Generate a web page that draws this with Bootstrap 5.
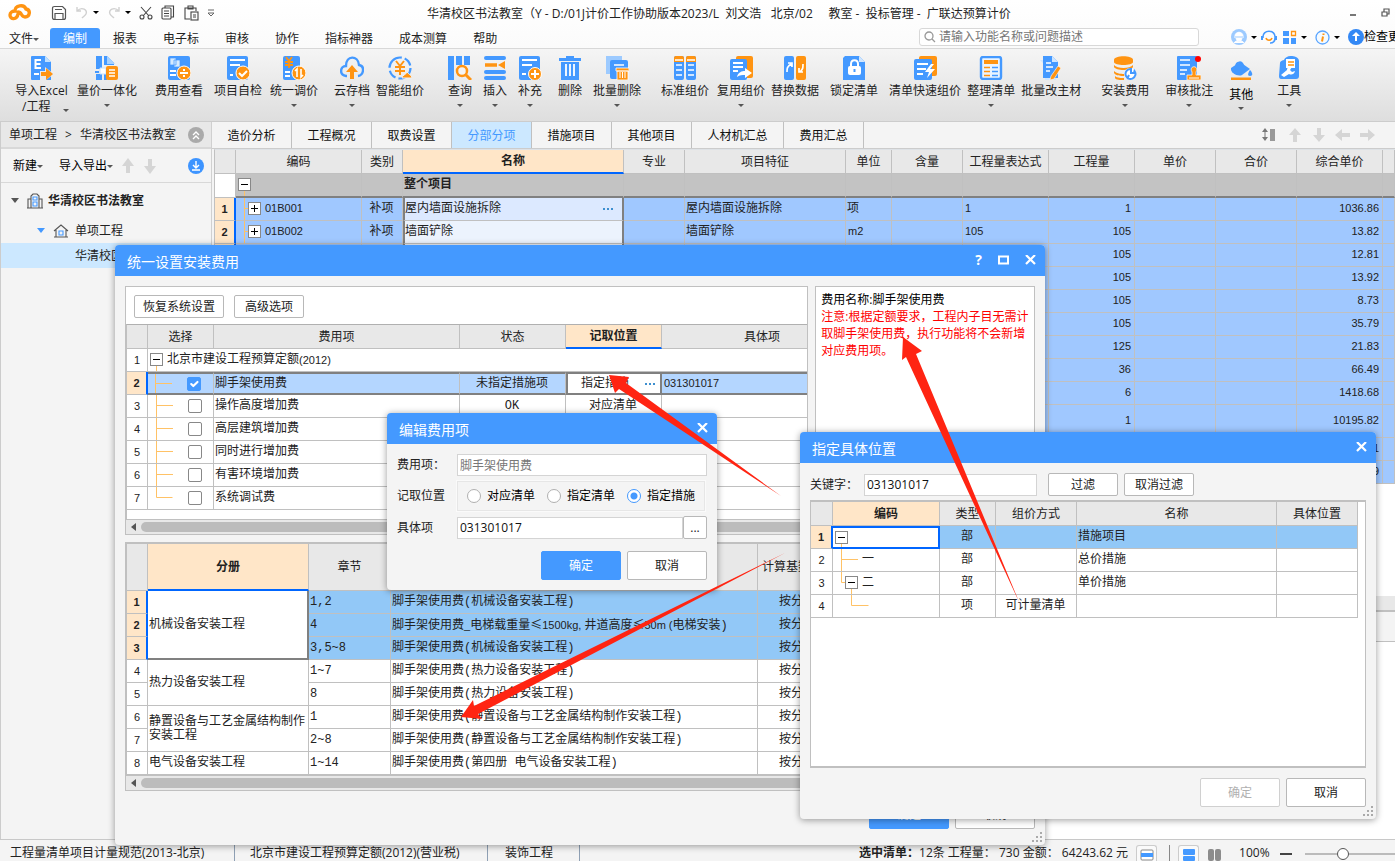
<!DOCTYPE html>
<html lang="zh-CN">
<head>
<meta charset="utf-8">
<meta name="viewport" content="width=device-width, initial-scale=1">
<title>广联达预算计价</title>
<link href="https://cdn.jsdelivr.net/npm/bootstrap@5.3.0/dist/css/bootstrap.min.css" rel="stylesheet">
<style>
:root{--blue:#4499ff;--org:#ff9412;--line:#c0c0c0;--head:#e8e8e8;--sel:#a0c8ff;--ui:"Open Sans","Noto Sans CJK SC",sans-serif}
body{font:12px/16px var(--ui);color:#222;background:#f4f4f4;height:100vh;overflow:hidden}
button,input{font:inherit;color:inherit}
a{color:inherit;text-decoration:none}
svg{display:block;flex:none}
.caret{width:0;height:0;border:3px solid transparent;border-top-color:#555;border-bottom:0;flex:none;display:inline-block}
.caret.dk{border-top-color:#000}
.plain{background:none;border:0;padding:0}
/* title, menu, ribbon */
.topbar{background:linear-gradient(#fff,#f4f4f4)}
.titlebar{height:25px;position:relative}
.qat{gap:4px;padding-left:8px}
.apptitle{position:absolute;left:427px;top:6px;white-space:pre;color:#222}
.menubar{height:24px;border-bottom:1px solid #d8d8d8}
.menubar .menu-item{padding:3px 13px 1px;height:20px;white-space:nowrap}
.menubar .menu-item.first{padding:3px 11px 1px 9px}
.menubar .menu-item.on{background:var(--blue);color:#fff;border-radius:3px 3px 0 0}
.search{width:280px;height:18px;border:1px solid #d8d8d8;border-radius:3px;background:#fff;padding-left:4px}
.search input{border:0;background:none;outline:0;padding:0 0 0 3px;width:240px;height:16px}
.search input::placeholder{color:#777;opacity:1}
.account{width:188px}
.ribbon{height:73px;background:linear-gradient(#f5f5f5,#dedede);border-bottom:1px solid #ccc;padding:7px 0 0 14px}
.rb{display:flex;flex-direction:column;align-items:center;white-space:nowrap;background:none;border:0;padding:0;flex:none;height:60px;color:#222}
.rb svg{width:24px;height:24px;margin-bottom:3px}
.rb .caret{margin-top:5px}
.s6{margin-left:6px}.s8{margin-left:8px}.s11{margin-left:11px}.s16{margin-left:16px}.s18{margin-left:18px}.s20{margin-left:20px}.s24{margin-left:24px}
/* side tree */
.side{width:212px;flex:none;border-left:1px solid #ccc;border-right:1px solid #d0d0d0;background:#f4f4f4}
.crumb{height:27px;background:var(--head);border-bottom:2px solid #d8d8d8;padding:0 7px 0 8px}
.sidetools{height:34px;border-bottom:1px solid #d8d8d8;padding:0 7px 0 12px}
.node{height:25px;white-space:nowrap}
.node.lg{height:35px}
.node.on{background:#cce8ff;padding-left:74px}
/* sheet tabs */
.sheets{height:27px;background:#f4f4f4;border-bottom:1px solid #ccc}
.sheets .sheet{width:80px;text-align:center;border-right:1px solid var(--line);line-height:28px;height:26px;color:#111}
.sheets .sheet.wide{width:92px}
.sheets .sheet.on{background:#cce8ff;color:var(--blue)}
/* grids */
.sheetgrid{border-collapse:separate;border-spacing:0;table-layout:fixed;color:#222;font-family:"Liberation Mono","Noto Sans CJK SC",monospace}
.sheetgrid th,.sheetgrid td{border-right:1px solid var(--line);border-bottom:1px solid var(--line);padding:0 2px;height:23px;line-height:14px;white-space:nowrap;overflow:hidden;font-weight:400}
.sheetgrid td{background:#fff;padding-left:1px}
.sheetgrid thead th{background:var(--head);text-align:center;height:24px;padding-top:2px}
.sheetgrid thead th.hot{background:#ffe6c8;font-weight:700;border-bottom:2px solid #0066ff}
.sheetgrid tbody th{text-align:center;background:#fff;padding:0}
.sheetgrid tbody th.hot{background:#ffe6c8;font-weight:700;border-right:2px solid #0066ff}
.lt,.sheetgrid .nn,.sheetgrid tbody th{font-family:"Liberation Sans","Noto Sans CJK SC",sans-serif;font-size:11px}
.cj{font-family:"Noto Sans CJK SC",sans-serif}
.sheetgrid td.nn{padding:0 3px 2px 2px}
.sheetgrid td.c{text-align:center}.sheetgrid td.r{text-align:right}
.sheetgrid .tree{padding:0}
.bill{width:100%}
.bill tbody td{background:var(--sel);padding-bottom:1px}
.bill .tree .lt{padding-bottom:2px}
.bill tr.grp td{background:#c3c3c3;border-bottom:2px solid #808080;font-weight:700;height:24px;padding-bottom:0}
.bill tr td.nm{background:#ecf3fd;border-left:2px solid #808080;border-right:2px solid #808080;padding-left:0}
.bill tr.first td.nm{background:#dce9ff}
.bill tr.tall td,.bill tr.tall th{height:33px}
.fill{background:#fff;border-left:1px solid var(--line);margin-left:2px}
/* windows */
.win{position:absolute;background:#f4f4f4;border-radius:4px;box-shadow:0 1px 7px rgba(0,0,0,.4)}
.winhead{height:31px;background:var(--blue);color:#fff;font-size:14px;border-radius:4px 4px 0 0;padding:2px 9px 0 12px}
.winhead .plain{padding-bottom:3px}
.w1{left:115px;top:245px;width:930px}
.w2{left:387px;top:413px;width:330px}
.w3{left:800px;top:432px;width:576px}
.pbtn{background:#fff;border:1px solid #b8b8b8;border-radius:2px;height:23px;padding:1px 0 0;line-height:20px;color:#222;text-align:center}
.pbtn.big{width:80px;height:29px}
.pbtn.pri{background:var(--blue);border-color:var(--blue);color:#fff}
.pbtn:disabled{color:#b0b0b0;border-color:#d0d0d0}
.wd90{width:90px}.wd70{width:70px}.wd24{width:24px}
.box{border:1px solid var(--line);background:#fff;overflow:hidden}
.tin{border:1px solid #d4d4d4;background:#fff;height:22px;padding:0 2px;outline:0;border-radius:0;color:#111}
.tin:disabled{color:#777;background:#fff}
.hbar{height:15px;background:var(--head);border-top:1px solid var(--line);gap:4px;padding-left:5px}
.hbar .thumb{height:10px;background:#bcbcbc;border-radius:5px 0 0 5px;flex:1}
.fees{width:736px}.parts{width:736px}.locs{width:547px}
.fees tr.on td{background:#b4d6ff;border-top:2px solid #808080;border-bottom:2px solid #808080}
.fees tr.on td.ed{background:#fff;border-left:2px solid #808080;border-right:2px solid #808080}
.fees .form-check-input{width:14px;height:14px;margin:0 0 0 5px;border:1px solid #888;border-radius:2px;background-color:#fff}
.fees .form-check-input:checked{background-color:var(--blue);border-color:var(--blue);background-size:14px}
.parts thead th,.parts thead th.hot{height:47px}
.parts tbody tr.on td{background:#92c8f7}
.parts tbody tr.on td.whole{background:#fff;border-right:2px solid #808080;border-bottom:2px solid #808080}
.parts td.whole{white-space:normal}
.parts td.base{padding-left:21px}
.locs tr.on td{background:#92c8f7}
.locs tr.on td.ed{background:#fff;border:2px solid #0066ff;border-left:0}
.locs thead th.hot{border-bottom-width:1px;border-bottom-color:var(--line)}
.note{width:220px;padding:4px 5px;line-height:17px;color:#000}
.note p{margin:0;color:#f00}
.lab{width:60px;flex:none}
.frow{margin-bottom:5px}
.radios{border:1px solid #e6e6e6;outline:1px solid #fafafa;height:30px;width:248px;padding-left:9px;gap:12px;color:#000}
.radios .form-check-input{width:14px;height:14px;margin:0 6px 0 0;border:1px solid #b0b0b0;background:#fff}
.radios .form-check-input:checked{border-color:var(--blue);background:radial-gradient(circle,var(--blue) 0 3px,#fff 4px)}
.grip{position:absolute;right:3px;bottom:3px}
.marks{position:absolute;left:0;top:0;pointer-events:none}
/* status bar */
.status{height:22px;border-top:1px solid #c8c8c8;background:#f4f4f4;white-space:nowrap}
.status .cellx{border-right:1px solid #8fa0b4;height:21px;padding-top:5px}
.status .rgt{width:536px;padding-top:5px;overflow:hidden}
.tog{width:21px;height:18px;border:1px solid #ccc;border-bottom:0;border-radius:3px 3px 0 0;background:#fafafa;padding:0;flex:none}
.rule{border-left:1px solid #888;height:18px}
.zoomer{width:104px;flex:none;appearance:none;height:12px;background:linear-gradient(#bbb,#bbb) center/100% 2px no-repeat}
.zoomer::-webkit-slider-thumb{appearance:none;width:12px;height:12px;border:1px solid #555;border-radius:50%;background:#fff}
</style>
</head>
<body class="d-flex flex-column">
<header class="topbar">
  <div class="titlebar d-flex align-items-center">
    <div class="qat d-flex align-items-center">
      <svg width="23" height="17" viewBox="0 0 23 17" fill="none" stroke="#ff9412" stroke-width="3.400" stroke-linecap="round"><path d="M10 10c-1 6-8 6-8 1 0-3 3-4 5-4 0-6 9-7 11-2 5 1 4 8-1 8-4 0-3-5-7-5"/></svg>
      <button class="plain ms-3" aria-label="保存"><svg width="16" height="16" fill="none" stroke="#555" stroke-width="1.2"><path d="M1.500 3.500q0-2 2-2h8l3 3v8q0 2-2 2h-9q-2 0-2-2zM4 4.500h7M4 14V8.500h8V14"/></svg></button>
      <button class="plain ms-1" aria-label="撤销"><svg width="14" height="14" fill="none" stroke="#d0d0d0" stroke-width="1.4"><path d="M2 1v4h4M2 5c5-5 11-1 9 3-1 2-3 3-4 4"/></svg></button>
      <i class="caret dk"></i>
      <button class="plain ms-1" aria-label="重做"><svg width="14" height="14" fill="none" stroke="#d0d0d0" stroke-width="1.4"><path d="M12 1v4H8M12 5C7 0 1 4 3 8c1 2 3 3 4 4"/></svg></button>
      <i class="caret dk"></i>
      <button class="plain ms-1" aria-label="剪切"><svg width="14" height="14" fill="none" stroke="#444" stroke-width="1.1"><path d="M2 1l8 9M12 1 4 10"/><circle cx="3" cy="11" r="2"/><circle cx="11" cy="11" r="2"/></svg></button>
      <button class="plain ms-1" aria-label="复制"><svg width="14" height="15" fill="none" stroke="#444" stroke-width="1.1"><rect x="1" y="3" width="9" height="11" rx="1"/><path d="M4 3V1h8.500v11H10M3 6h5M3 8.500h5M3 11h5"/></svg></button>
      <button class="plain ms-1" aria-label="粘贴"><svg width="16" height="16" fill="none" stroke="#444" stroke-width="1.1"><path d="M7 14H2V3h11v3M5 1h5v3H5z"/><rect x="8" y="7" width="7" height="8"/><path d="M10 10h3M10 12h3"/></svg></button>
      <svg class="ms-1" width="8" height="8" fill="none" stroke="#666"><path d="M1 1h6M1 4l3 3 3-3z"/></svg>
    </div>
    <div class="apptitle">华清校区书法教室（Y - D:/01J计价工作协助版本2023/L  刘文浩   北京/02     教室 -  投标管理 -  广联达预算计价</div>
    <div class="ms-auto d-flex align-items-center gap-4">
      <button class="plain" aria-label="最小化"><svg width="8" height="8"><path d="M1 6h6" stroke="#555" stroke-width="1.6"/></svg></button>
      <button class="plain me-1" aria-label="还原"><svg width="10" height="10" fill="none" stroke="#555" stroke-width="1.2"><path d="M1 4h5v4H1zM3 4V1h5v5H6"/></svg></button>
    </div>
  </div>
  <nav class="menubar d-flex align-items-end overflow-hidden">
    <a class="menu-item first" href="#">文件<i class="caret align-middle"></i></a>
    <a class="menu-item on" href="#">编制</a><a class="menu-item" href="#">报表</a><a class="menu-item" href="#">电子标</a><a class="menu-item" href="#">审核</a><a class="menu-item" href="#">协作</a><a class="menu-item" href="#">指标神器</a><a class="menu-item" href="#">成本测算</a><a class="menu-item" href="#">帮助</a>
    <div class="ms-auto d-flex align-items-center flex-shrink-0" style="margin-bottom:2px">
      <label class="search d-flex align-items-center"><svg width="12" height="12" fill="none" stroke="#999" stroke-width="1.3"><circle cx="5" cy="5" r="4"/><path d="M8 8l3 3"/></svg><input type="text" placeholder="请输入功能名称或问题描述" aria-label="搜索"></label>
      <div class="account d-flex align-items-center ps-4 ms-2">
        <svg width="16" height="16"><circle cx="8" cy="8" r="8" fill="#9ccaff"/><path d="M4 7c0-5 8-5 8 0M3 8h10M5 9c1 5 5 5 6 0M3 14c1-3 9-3 10 0" fill="#fff" stroke="#fff"/></svg>
        <i class="caret dk ms-1 me-1"></i>
        <svg width="16" height="16" fill="none"><path d="M2 9c-1-9 13-9 12 0M14 9c0 3-2 5-5 5" stroke="#4499ff" stroke-width="1.6"/><path d="M1 7v4M15 7v4" stroke="#4499ff" stroke-width="2"/><path d="M5 9c1 3 5 3 6 0" stroke="#ff9412" stroke-width="1.6"/></svg>
        <svg class="ms-1 me-1" width="16" height="16"><path d="M2 2h6v5H2zM2 9h6v6H2zM10 9h5v6h-5z" fill="#4499ff"/><path d="M10.500 2.500h4v4h-4z" fill="none" stroke="#ff9412" stroke-width="1.3"/></svg>
        <i class="caret dk me-1"></i>
        <svg class="ms-1 me-1" width="15" height="15"><circle cx="7.500" cy="7.500" r="6.500" fill="#f4faff" stroke="#5aa5ff" stroke-width="1.3"/><path d="M8.500 3.500v1.500M8 6.500l-1 5" stroke="#ff9412" stroke-width="2"/></svg>
        <i class="caret dk me-1"></i>
        <svg class="ms-1" width="16" height="16"><circle cx="8" cy="8" r="8" fill="#3388f5"/><path d="M8 3l4 4H9v5H7V7H4z" fill="#fff"/></svg>
        <a href="#" class="text-black text-nowrap">检查更新</a>
      </div>
    </div>
  </nav>
  <div class="ribbon d-flex overflow-hidden">
    <button class="rb"><svg viewBox="0 0 24 24"><path d="M2 1q0-1 1-1h13l6 6v18H3q-1 0-1-1z" fill="#4499ff"/><path d="M16 0v6h6z" fill="#bfe0ff"/><path d="M12 4H6.500v8H12M7 8h4.500" fill="none" stroke="#fff" stroke-width="2"/><path d="M5 18h5" stroke="#fff" stroke-width="2"/><path d="M11 15h5v-4l9 7-8 6H11z" fill="#e9e9e9"/><path d="M12 16h5v-4l7 6-7 6v-4h-5z" fill="#ff9412"/></svg>导入Excel<span class="ps-2">/工程 &nbsp;&nbsp;&nbsp;<i class="caret align-middle"></i></span></button>
    <button class="rb s8"><svg viewBox="0 0 24 24"><path d="M1 0h6v13H1zM1 18h6v6H1zM10 0l8 7v2h-8zM9 17h3v7H9zM0 15h4v2H0z" fill="#4499ff"/><path d="M9 0h3l7 7v2H9z" fill="#4499ff"/><path d="M12 0l8 8h-8z" fill="#a8d2ff"/><path d="M5 12h6v6H5z" fill="#fff" stroke="#c8e2ff"/><rect x="11" y="10" width="12" height="14" rx="2" fill="#ff9412"/><path d="M14 14h6M14 17h6M14 20h6" stroke="#fff" stroke-width="1.500"/></svg>量价一体化<i class="caret"></i></button>
    <button class="rb s18"><svg viewBox="0 0 24 24"><rect x="1" y="0" width="22" height="24" rx="2" fill="#4499ff"/><path d="M3 2h6v7H3zM7 4h6v7H7z" fill="#d5eaff" stroke="#4499ff" stroke-width=".7"/><path d="M3 15h6M3 19h6" stroke="#fff" stroke-width="2"/><circle cx="17" cy="17" r="7" fill="#ff9412" stroke="#fff"/><path d="M13 17h8M17 13v2M17 19v2" stroke="#fff" stroke-width="2"/></svg>费用查看</button>
    <button class="rb s11"><svg viewBox="0 0 24 24"><rect x="1" width="21" height="24" rx="2" fill="#4499ff"/><path d="M4 4h15M4 9h10M4 19h3" stroke="#fff" stroke-width="2"/><circle cx="17" cy="17" r="7" fill="#ff9412" stroke="#fff"/><path d="M13 17l3 3 5-5" fill="none" stroke="#fff" stroke-width="2"/></svg>项目自检</button>
    <button class="rb s8"><svg viewBox="0 0 24 24"><rect x="1" width="17" height="24" rx="2" fill="#4499ff"/><path d="M4 1l3 4 3-4M3 6h8M3 9h8M7 5v7" fill="none" stroke="#ff9412" stroke-width="1.800"/><path d="M3 16h5M3 20h5" stroke="#fff" stroke-width="2"/><circle cx="17" cy="17" r="7" fill="#ff9412" stroke="#fff"/><path d="M15 21v-8l-2 2M19 13v8l2-2" fill="none" stroke="#fff" stroke-width="1.600"/></svg>统一调价<i class="caret"></i></button>
    <button class="rb s16"><svg viewBox="0 0 24 24"><path d="M7 20H6c-7-1-6-10 0-10 0-11 12-11 13-1 6 1 5 10-1 11" fill="none" stroke="#4499ff" stroke-width="2.400"/><path d="M12 9l6 7h-4v7h-4v-7H6z" fill="#ff9412"/></svg>云存档<i class="caret"></i></button>
    <button class="rb s6"><svg viewBox="0 0 24 24"><circle cx="12" cy="12" r="10.500" fill="none" stroke="#4499ff" stroke-width="2.200" stroke-dasharray="18 3 9 3"/><path d="M8 5l4 5 4-5M7 11h10M7 15h10M12 10v9" fill="none" stroke="#ff9412" stroke-width="2"/><path d="M14 22c0-3 4-3 5-6 1 2 5 3 5 6z" fill="#ff9412" stroke="#f0f0f0"/></svg>智能组价</button>
    <button class="rb s24"><svg viewBox="0 0 24 24"><path d="M0 0h6v24H0zM8 0h6v9H8zM16 0h6v9h-6z" fill="#4499ff"/><circle cx="14" cy="15" r="5" fill="#f4f4f4" stroke="#ff9412" stroke-width="2.500"/><path d="M18 19l5 5" stroke="#ff9412" stroke-width="3"/></svg>查询<i class="caret"></i></button>
    <button class="rb s11"><svg viewBox="0 0 24 24"><path d="M3 2h18M3 16h18M3 22h18" stroke="#4499ff" stroke-width="4" stroke-linecap="round"/><path d="M2 9h12" stroke="#ff9412" stroke-width="3.500"/><path d="M22 5v8l-7-4z" fill="#ff9412"/></svg>插入<i class="caret"></i></button>
    <button class="rb s11"><svg viewBox="0 0 24 24"><rect x="1" width="21" height="24" rx="2" fill="#4499ff"/><path d="M4 4h15M4 9h10M4 18h4" stroke="#fff" stroke-width="2"/><circle cx="17" cy="18" r="6.500" fill="#ff9412" stroke="#fff"/><path d="M13 18h8M17 14v8" stroke="#fff" stroke-width="2"/></svg>补充<i class="caret"></i></button>
    <button class="rb s16"><svg viewBox="0 0 24 24"><path d="M1 2h7V0h8v2h7v3H1zM3 6h18v18H3z" fill="#4499ff"/><path d="M8 8v12M12 8v12M16 8v12" stroke="#fff" stroke-width="1.800"/></svg>删除</button>
    <button class="rb s11"><svg viewBox="0 0 24 24"><path d="M1 0h16v18H1z" fill="#9ccaff"/><rect x="5" y="4" width="18" height="19" rx="2" fill="#4499ff"/><path d="M9 9h10" stroke="#fff" stroke-width="1.500"/><path d="M11 12h13v3H11zM12 15h11v9H12z" fill="#ff9412" stroke="#fff" stroke-width=".8"/><path d="M15 16v6M17.500 16v6M20 16v6" stroke="#fff"/></svg>批量删除<i class="caret"></i></button>
    <button class="rb s20"><svg viewBox="0 0 24 24"><rect x="1" width="10" height="24" rx="2" fill="#4499ff"/><rect x="13" width="10" height="24" rx="2" fill="#4499ff"/><path d="M1 2q0-2 2-2h6q2 0 2 2v4H1zM13 2q0-2 2-2h6q2 0 2 2v4H13z" fill="#ff9412"/><path d="M2 4h8M14 4h8M3 9h6M3 14h6M3 19h6M15 9h6M15 14h6M15 19h6" stroke="#fff" stroke-width="1.600"/></svg>标准组价</button>
    <button class="rb s8"><svg viewBox="0 0 24 24"><rect x="7" width="17" height="22" rx="2" fill="#ff9412"/><rect x="1" y="3" width="17" height="21" rx="2" fill="#4499ff"/><path d="M4 7h10M4 11h10M4 15h5" stroke="#fff" stroke-width="1.800"/><path d="M8 21c1-5 5-6 8-6v-3l7 5-7 5v-3c-3 0-5 0-8 2z" fill="#fff"/></svg>复用组价<i class="caret"></i></button>
    <button class="rb s6"><svg viewBox="0 0 24 24"><rect x="1" width="10" height="24" rx="2" fill="#4499ff"/><rect x="13" width="10" height="24" rx="2" fill="#ff9412"/><path d="M4 16c0-4 0-5 4-8M5 7h4v4M20 8c0 4 0 5-3 8M20 16h-4v-4" fill="none" stroke="#fff" stroke-width="1.700"/></svg>替换数据</button>
    <button class="rb s11"><svg viewBox="0 0 24 24"><path d="M1 2l2-2h14l6 6v18H1z" fill="#4499ff"/><path d="M17 0v6h6z" fill="#cfe6ff"/><rect x="6" y="10" width="13" height="9" rx="2" fill="#fff"/><path d="M9 10V8c0-5 7-5 7 0v2" fill="none" stroke="#fff" stroke-width="2"/><path d="M12.500 13v3" stroke="#4499ff" stroke-width="2"/></svg>锁定清单</button>
    <button class="rb s11"><svg viewBox="0 0 24 24"><rect x="6" width="18" height="20" rx="2" fill="#ff9412"/><rect x="1" y="3" width="18" height="21" rx="2" fill="#4499ff"/><path d="M4 8h11M4 13h9M4 18h6" stroke="#fff" stroke-width="1.800"/><path d="M18 8l-6 8h4l-2 6 8-9h-5l4-5z" fill="#fff"/></svg>清单快速组价</button>
    <button class="rb s6"><svg viewBox="0 0 24 24"><rect x="2" y="1" width="20" height="22" rx="2" fill="#eaf4ff" stroke="#4499ff" stroke-width="2.400"/><path d="M5 6h14" stroke="#ff9412" stroke-width="4"/><path d="M5 11.500h6M5 15.500h6M5 19.500h6" stroke="#ff9412" stroke-width="1.600"/><path d="M13 11.500h6M13 15.500h6M13 19.500h6" stroke="#4499ff" stroke-width="1.600"/></svg>整理清单<i class="caret"></i></button>
    <button class="rb s6"><svg viewBox="0 0 24 24"><path d="M1 4h5v20h11v-2" fill="#cfe6ff"/><path d="M4 0h9l6 6v16H4z" fill="#4499ff"/><path d="M13 0v6h6z" fill="#cfe6ff"/><path d="M7 7h5M7 11h7M7 15h4" stroke="#fff" stroke-width="1.700"/><path d="M19 10l3 2-7 11-4 1 1-4z" fill="#ff9412" stroke="#fff" stroke-width=".6"/></svg>批量改主材</button>
    <button class="rb s20"><svg viewBox="0 0 24 24"><path d="M1 4c0-5 19-5 19 0v2c0 4-19 4-19 0z" fill="#ff9412"/><path d="M1 9c3 4 16 4 19 0v2c-2 4-17 4-19 0zM1 15c3 3 8 3 12 3l-1 2c-4 0-9 0-11-3zM2 20c2 2 7 2 9 2v2c-4 0-8 0-9-2z" fill="#ff9412"/><circle cx="17" cy="18" r="6" fill="#fff"/><path d="M21.500 15a5 5 0 1 1-3.500-2v4h3zM16 19l-2 4" fill="none" stroke="#4499ff" stroke-width="2"/></svg>安装费用<i class="caret"></i></button>
    <button class="rb s16"><svg viewBox="0 0 24 24"><rect width="20" height="24" rx="1" fill="#4499ff"/><path d="M3 4h10M3 9h10M3 14h7M3 18h5" stroke="#fff" stroke-width="1.600"/><path d="M10 24v-5h5v-3c-4-7 8-7 4 0v3h5v5z" fill="#ff9412" stroke="#fff" stroke-width=".7"/><path d="M12 22h10" stroke="#fff"/><circle cx="21" cy="3" r="3" fill="#f00"/></svg>审核批注<i class="caret"></i></button>
    <button class="rb s16 text-black"><svg viewBox="0 0 24 24"><path d="M11 6l10 7-8 6c-4 2-12-2-11-7z" fill="#4499ff"/><path d="M7 11c0-6 7-6 7-1" fill="none" stroke="#4499ff" stroke-width="2"/><path d="M21 14c3 3 3 6 0 6s-2-3 0-6z" fill="#4499ff"/><path d="M2 23.500h20" stroke="#ff9412" stroke-width="4"/></svg><span class="pt-1">其他</span><i class="caret mt-1"></i></button>
    <button class="rb s24"><svg viewBox="0 0 24 24"><path d="M3 7q0-2 4-3c2-6 15-5 15 1v15q0 3-3 3H4q-2 0-2-3z" fill="#4499ff"/><path d="M9 3h9v9H9z" fill="#fff"/><path d="M11 6h6M11 9h6" stroke="#ff9412" stroke-width="1.600"/><path d="M4 19l6-5c0-4 4-4 5-3l-2 3 2 2 3-1c-1 4-4 4-6 3l-5 3z" fill="#fff"/></svg>工具<i class="caret"></i></button>
  </div>
</header>

<main class="d-flex flex-fill overflow-hidden">
  <aside class="side">
    <div class="crumb d-flex align-items-center"><span>单项工程</span><span class="px-1 mx-1">&gt;</span><span>华清校区书法教室</span>
      <svg class="ms-auto" width="16" height="16" fill="none" stroke="#fff" stroke-width="1.400"><circle cx="8" cy="8" r="8" fill="#aaa" stroke="none"/><path d="M5 8l3-3 3 3M5 12l3-3 3 3"/></svg></div>
    <div class="sidetools d-flex align-items-center">
      <button class="plain text-black">新建<i class="caret align-middle"></i></button>
      <button class="plain text-black ms-3">导入导出<i class="caret align-middle"></i></button>
      <svg class="ms-2 me-1" width="14" height="16" fill="#d5d5d5"><path d="M7 0l6 8H9v7H5V8H1z"/></svg>
      <svg class="ms-1" width="14" height="16" fill="#d5d5d5"><path d="M7 16l6-8H9V1H5v7H1z"/></svg>
      <svg class="ms-auto" width="16" height="16" fill="none" stroke="#fff" stroke-width="1.400"><circle cx="8" cy="8" r="8" fill="#3d94ff" stroke="none"/><path d="M8 3v7M5 7l3 3 3-3M4 12h8"/></svg>
    </div>
    <div class="node lg d-flex align-items-center fw-bold ps-2"><svg width="13" height="8"><path d="M2 1h8L6 6z" fill="#555"/></svg>
      <svg class="ms-1 me-1" width="18" height="16" fill="none" stroke="#555" stroke-width="1.100"><path d="M1 15h16M2 15V6h3M5 15V3l2-2h4l2 2v12M13 6h3v9"/><path d="M7 4h4v3H7zM7 9h4v4H7z" stroke="#4499ff"/></svg>华清校区书法教室</div>
    <div class="node d-flex align-items-center ps-4"><svg class="ms-2" width="16" height="8"><path d="M4 1h8L8 6z" fill="#4499ff"/></svg>
      <svg class="ms-1 me-1" width="18" height="16" fill="none" stroke="#555" stroke-width="1.100"><path d="M1 8l7-6 7 6M3 7v7h10V7M1 14h14"/><path d="M6 8h4v4H6z" stroke="#4499ff"/></svg>单项工程</div>
    <div class="node on d-flex align-items-center">华清校区书法教室</div>
  </aside>

  <section class="d-flex flex-column flex-fill overflow-hidden">
    <div class="sheets d-flex flex-shrink-0">
      <a class="sheet" href="#">造价分析</a><a class="sheet" href="#">工程概况</a><a class="sheet" href="#">取费设置</a><a class="sheet on" href="#">分部分项</a><a class="sheet" href="#">措施项目</a><a class="sheet" href="#">其他项目</a><a class="sheet wide" href="#">人材机汇总</a><a class="sheet" href="#">费用汇总</a>
      <div class="ms-auto d-flex align-items-center gap-2 pe-3">
        <svg width="18" height="14"><path d="M4 0l3 4H1zM4 13l3-4H1zM3.500 4h1v5h-1z" fill="#777"/><path d="M9 1h5v12H9z" fill="#999"/></svg>
        <svg width="16" height="16" fill="#d5d5d5"><path d="M8 1l6 7h-4v7H6V8H2z"/></svg>
        <svg width="16" height="16" fill="#d5d5d5"><path d="M8 15l6-7h-4V1H6v7H2z"/></svg>
        <svg width="16" height="16" fill="#d5d5d5"><path d="M0 8l7-6v4h8v4H7v4z"/></svg>
        <svg class="me-1" width="16" height="16" fill="#d5d5d5"><path d="M16 8l-7-6v4H1v4h8v4z"/></svg>
      </div>
    </div>
    <div class="fill flex-fill overflow-hidden border-top">
    <table class="sheetgrid bill">
      <colgroup><col style="width:21px"><col style="width:126px"><col style="width:41px"><col style="width:221px"><col style="width:61px"><col style="width:161px"><col style="width:46px"><col style="width:71px"><col style="width:86px"><col style="width:86px"><col style="width:81px"><col style="width:81px"><col style="width:86px"><col></colgroup>
      <thead><tr><th></th><th>编码</th><th>类别</th><th class="hot">名称</th><th>专业</th><th>项目特征</th><th>单位</th><th>含量</th><th>工程量表达式</th><th>工程量</th><th>单价</th><th>合价</th><th>综合单价</th><th></th></tr></thead>
      <tbody>
      <tr class="grp"><th></th><td class="tree"><svg width="30" height="22"><path d="M8.500 16v8" stroke="#ffc266"/><rect x="2.500" y="4.500" width="12" height="12" fill="#fff" stroke="#888"/><path d="M5 10.500h7" stroke="#000"/></svg></td><td></td><td>整个项目</td><td></td><td></td><td></td><td></td><td></td><td></td><td></td><td></td><td></td><td></td></tr>
      <tr class="first"><th class="hot">1</th><td class="tree"><span class="d-flex align-items-center"><svg width="29" height="22"><path d="M8.500 0v22M8 10.500h5" stroke="#ffc266" fill="none"/><rect x="12.500" y="4.500" width="12" height="12" fill="#fff" stroke="#888"/><path d="M15 10.500h7M18.500 7v7" stroke="#000"/></svg><span class="lt">01B001</span></span></td><td class="c">补项</td><td class="nm"><span class="d-flex justify-content-between pe-1">屋内墙面设施拆除<svg width="14" height="14" fill="#3d8fd0"><path d="M1 6h2v2H1zM5 6h2v2H5zM9 6h2v2H9z"/></svg></span></td><td></td><td>屋内墙面设施拆除</td><td>项</td><td></td><td class="nn">1</td><td class="nn r">1</td><td></td><td></td><td class="nn r">1036.86</td><td></td></tr>
      <tr><th class="hot">2</th><td class="tree"><span class="d-flex align-items-center"><svg width="29" height="22"><path d="M8.500 0v22M8 10.500h5" stroke="#ffc266" fill="none"/><rect x="12.500" y="4.500" width="12" height="12" fill="#fff" stroke="#888"/><path d="M15 10.500h7M18.500 7v7" stroke="#000"/></svg><span class="lt">01B002</span></span></td><td class="c">补项</td><td class="nm">墙面铲除</td><td></td><td>墙面铲除</td><td class="nn">m2</td><td></td><td class="nn">105</td><td class="nn r">105</td><td></td><td></td><td class="nn r">13.82</td><td></td></tr>
      <tr><th class="hot"></th><td></td><td></td><td class="nm"></td><td></td><td></td><td></td><td></td><td></td><td class="nn r">105</td><td></td><td></td><td class="nn r">12.81</td><td></td></tr>
      <tr><th class="hot"></th><td></td><td></td><td class="nm"></td><td></td><td></td><td></td><td></td><td></td><td class="nn r">105</td><td></td><td></td><td class="nn r">13.92</td><td></td></tr>
      <tr><th class="hot"></th><td></td><td></td><td class="nm"></td><td></td><td></td><td></td><td></td><td></td><td class="nn r">105</td><td></td><td></td><td class="nn r">8.73</td><td></td></tr>
      <tr><th class="hot"></th><td></td><td></td><td class="nm"></td><td></td><td></td><td></td><td></td><td></td><td class="nn r">105</td><td></td><td></td><td class="nn r">35.79</td><td></td></tr>
      <tr><th class="hot"></th><td></td><td></td><td class="nm"></td><td></td><td></td><td></td><td></td><td></td><td class="nn r">125</td><td></td><td></td><td class="nn r">21.83</td><td></td></tr>
      <tr><th class="hot"></th><td></td><td></td><td class="nm"></td><td></td><td></td><td></td><td></td><td></td><td class="nn r">36</td><td></td><td></td><td class="nn r">66.49</td><td></td></tr>
      <tr><th class="hot"></th><td></td><td></td><td class="nm"></td><td></td><td></td><td></td><td></td><td></td><td class="nn r">6</td><td></td><td></td><td class="nn r">1418.68</td><td></td></tr>
      <tr class="tall"><th class="hot"></th><td></td><td></td><td class="nm"></td><td></td><td></td><td></td><td></td><td></td><td class="nn r">1</td><td></td><td></td><td class="nn r">10195.82</td><td></td></tr>
      <tr><th class="hot"></th><td></td><td></td><td class="nm"></td><td></td><td></td><td></td><td></td><td></td><td></td><td></td><td></td><td class="nn r">1</td><td></td></tr>
      <tr><th class="hot"></th><td></td><td></td><td class="nm"></td><td></td><td></td><td></td><td></td><td></td><td></td><td></td><td></td><td class="nn r">9</td><td></td></tr>
      </tbody>
    </table>
    </div>
    <div style="height:14px;background:#e8e8e8" class="flex-shrink-0"></div>
    <div class="flex-shrink-0" style="height:32px;border-top:2px solid #c0c0c0;border-bottom:1px solid #c0c0c0"></div>
    <div class="flex-shrink-0 bg-white" style="height:197px"></div>
  </section>
</main>

<footer class="status d-flex flex-shrink-0 overflow-hidden">
  <div class="cellx" style="width:235px;padding-left:10px">工程量清单项目计量规范(2013-北京)</div>
  <div class="cellx" style="width:253px;padding-left:15px">北京市建设工程预算定额(2012)(营业税)</div>
  <div class="cellx" style="width:92px;padding-left:17px">装饰工程</div>
  <div class="rgt ms-auto d-flex flex-shrink-0 align-items-start">
    <span><b class="fw-semibold">选中清单：</b>12条 工程量： 730 金额： 64243.62 元</span>
    <button class="tog ms-2 me-2 d-flex align-items-center justify-content-center" aria-label="单栏"><svg width="14" height="12"><rect x="1" y="1" width="12" height="10" rx="1" fill="#fff" stroke="#888"/><path d="M1 4h12v4H1z" fill="#4499ff"/></svg></button>
    <span class="rule ms-1 me-2"></span>
    <button class="tog d-flex align-items-center justify-content-center" aria-label="上下"><svg width="14" height="12" fill="#4499ff"><rect x="1" width="12" height="6" rx="1"/><rect x="1" y="7" width="12" height="5" rx="1"/></svg></button>
    <svg class="ms-2 mt-1" width="16" height="12" fill="#8c8c8c"><rect x="1" width="6" height="12" rx="2"/><rect x="8" width="6" height="12" rx="2"/></svg>
    <span class="ms-3">100%</span>
    <svg class="ms-2 me-2 mt-2" width="16" height="4"><path d="M2 1h12" stroke="#444" stroke-width="2"/></svg>
    <input class="zoomer" type="range" value="35" aria-label="缩放" style="margin:3px 0 0 3px">
  </div>
</footer>

<div class="win w1 pb-3" role="dialog" aria-label="统一设置安装费用">
  <div class="winhead d-flex align-items-center">统一设置安装费用
    <div class="ms-auto d-flex align-items-center gap-3">
      <button class="plain fw-bold text-white" aria-label="帮助">?</button>
      <button class="plain" aria-label="最大化"><svg width="11" height="10"><path d="M1 1.500h9v7H1z" fill="none" stroke="#fff" stroke-width="2"/></svg></button>
      <button class="plain" aria-label="关闭"><svg width="11" height="10"><path d="M1 0l9 9M10 0L1 9" stroke="#fff" stroke-width="2.200"/></svg></button>
    </div>
  </div>
  <div class="d-flex" style="padding:10px 10px 0;gap:7px;height:260px">
    <div class="box d-flex flex-column" style="width:684px;height:249px">
      <div class="d-flex flex-shrink-0" style="padding:8px;gap:10px;height:37px"><button class="pbtn wd90">恢复系统设置</button><button class="pbtn wd70">高级选项</button></div>
      <div class="flex-fill" style="border-top:1px solid #b0b0b0;border-left:1px solid #c0c0c0">
      <table class="sheetgrid fees">
        <colgroup><col style="width:21px"><col style="width:66px"><col style="width:246px"><col style="width:106px"><col style="width:96px"><col></colgroup>
        <thead><tr><th></th><th>选择</th><th>费用项</th><th>状态</th><th class="hot">记取位置</th><th>具体项</th></tr></thead>
        <tbody>
        <tr><th>1</th><td class="tree" colspan="5"><span class="d-flex align-items-center"><svg width="19" height="22"><path d="M8.500 16v6" stroke="#ffc266"/><rect x="2.500" y="4.500" width="12" height="12" fill="#fff" stroke="#888"/><path d="M5 10.500h7" stroke="#000"/></svg>北京市建设工程预算定额<span class="lt">(2012)</span></span></td></tr>
        <tr class="on"><th class="hot">2</th><td class="tree"><span class="d-flex align-items-center"><svg width="34" height="19"><path d="M7.500 0v19M7 9.500h17" stroke="#ffc266" fill="none"/></svg><input class="form-check-input" type="checkbox" checked aria-label="脚手架使用费"></span></td><td>脚手架使用费</td><td class="c">未指定措施项</td><td class="ed"><span class="d-flex justify-content-between ps-2 ms-1">指定措施<svg width="14" height="14" fill="#3d8fd0"><path d="M1 6h2v2H1zM5 6h2v2H5zM9 6h2v2H9z"/></svg></span></td><td class="nn">031301017</td></tr>
        <tr><th>3</th><td class="tree"><span class="d-flex align-items-center"><svg width="35" height="22"><path d="M8.500 0v22M8 10.500h17" stroke="#ffc266" fill="none"/></svg><input class="form-check-input" type="checkbox" aria-label="操作高度增加费"></span></td><td>操作高度增加费</td><td class="c">OK</td><td class="c">对应清单</td><td></td></tr>
        <tr><th>4</th><td class="tree"><span class="d-flex align-items-center"><svg width="35" height="22"><path d="M8.500 0v22M8 10.500h17" stroke="#ffc266" fill="none"/></svg><input class="form-check-input" type="checkbox" aria-label="高层建筑增加费"></span></td><td>高层建筑增加费</td><td></td><td></td><td></td></tr>
        <tr><th>5</th><td class="tree"><span class="d-flex align-items-center"><svg width="35" height="22"><path d="M8.500 0v22M8 10.500h17" stroke="#ffc266" fill="none"/></svg><input class="form-check-input" type="checkbox" aria-label="同时进行增加费"></span></td><td>同时进行增加费</td><td></td><td></td><td></td></tr>
        <tr><th>6</th><td class="tree"><span class="d-flex align-items-center"><svg width="35" height="22"><path d="M8.500 0v22M8 10.500h17" stroke="#ffc266" fill="none"/></svg><input class="form-check-input" type="checkbox" aria-label="有害环境增加费"></span></td><td>有害环境增加费</td><td></td><td></td><td></td></tr>
        <tr><th>7</th><td class="tree"><span class="d-flex align-items-center"><svg width="35" height="22"><path d="M8.500 0v10.500h16" stroke="#ffc266" fill="none"/></svg><input class="form-check-input" type="checkbox" aria-label="系统调试费"></span></td><td>系统调试费</td><td></td><td></td><td></td></tr>
        </tbody>
      </table>
      </div>
      <div class="hbar d-flex align-items-center flex-shrink-0"><svg width="6" height="8"><path d="M5 0v8L0 4z" fill="#555"/></svg><div class="thumb"></div></div>
    </div>
    <div class="box note">费用名称:脚手架使用费<p>注意:根据定额要求，工程内子目无需计取脚手架使用费，执行功能将不会新增对应费用项。</p></div>
  </div>
  <div class="box d-flex flex-column" style="margin:6px 10px 0;height:249px;border-top-width:2px">
    <div class="flex-fill" style="border-left:1px solid #c0c0c0">
    <table class="sheetgrid parts">
      <colgroup><col style="width:21px"><col style="width:161px"><col style="width:82px"><col style="width:367px"><col></colgroup>
      <thead><tr><th></th><th class="hot">分册</th><th>章节</th><th>名称</th><th class="text-start ps-1">计算基数</th></tr></thead>
      <tbody>
      <tr class="on"><th class="hot">1</th><td class="whole" rowspan="3">机械设备安装工程</td><td>1,2</td><td>脚手架使用费(机械设备安装工程)</td><td class="base">按分</td></tr>
      <tr class="on"><th class="hot">2</th><td>4</td><td>脚手架使用费<span class="lt">_</span>电梯载重量<span class="cj">≤</span><span class="lt">1500kg, </span>井道高度<span class="cj">≤</span><span class="lt">50m (</span>电梯安装)</td><td class="base">按分</td></tr>
      <tr class="on"><th class="hot">3</th><td>3,5~8</td><td>脚手架使用费(机械设备安装工程)</td><td class="base">按分</td></tr>
      <tr><th>4</th><td class="whole" rowspan="2">热力设备安装工程</td><td>1~7</td><td>脚手架使用费(热力设备安装工程)</td><td class="base">按分</td></tr>
      <tr><th>5</th><td>8</td><td>脚手架使用费(热力设备安装工程)</td><td class="base">按分</td></tr>
      <tr><th>6</th><td class="whole" rowspan="2">静置设备与工艺金属结构制作安装工程</td><td>1</td><td>脚手架使用费(静置设备与工艺金属结构制作安装工程)</td><td class="base">按分</td></tr>
      <tr><th>7</th><td>2~8</td><td>脚手架使用费(静置设备与工艺金属结构制作安装工程)</td><td class="base">按分</td></tr>
      <tr><th>8</th><td>电气设备安装工程</td><td>1~14</td><td>脚手架使用费(第四册 电气设备安装工程)</td><td class="base">按分</td></tr>
      </tbody>
    </table>
    </div>
    <div class="hbar d-flex align-items-center flex-shrink-0"><svg width="6" height="8"><path d="M5 0v8L0 4z" fill="#555"/></svg><div class="thumb"></div></div>
  </div>
  <div class="d-flex justify-content-end" style="gap:6px;padding:9px 10px 0"><button class="pbtn big pri">确定</button><button class="pbtn big">取消</button></div>
  <svg class="grip" width="10" height="10" fill="#aaa"><path d="M8 0h2v2H8zM4 4h2v2H4zM8 4h2v2H8zM0 8h2v2H0zM4 8h2v2H4zM8 8h2v2H8z"/></svg>
</div>

<div class="win w2" role="dialog" aria-label="编辑费用项">
  <div class="winhead d-flex align-items-center">编辑费用项<button class="plain ms-auto" aria-label="关闭"><svg width="11" height="10"><path d="M1 0l9 9M10 0L1 9" stroke="#fff" stroke-width="2.200"/></svg></button></div>
  <div style="padding:10px">
    <div class="d-flex align-items-center frow"><label class="lab" for="fee">费用项：</label><input id="fee" class="tin" style="width:250px" value="脚手架使用费" disabled></div>
    <div class="d-flex align-items-center frow"><span class="lab">记取位置</span>
      <div class="radios d-flex align-items-center">
        <label class="d-flex align-items-center"><input class="form-check-input" type="radio" name="pos">对应清单</label>
        <label class="d-flex align-items-center"><input class="form-check-input" type="radio" name="pos">指定清单</label>
        <label class="d-flex align-items-center"><input class="form-check-input" type="radio" name="pos" checked>指定措施</label>
      </div></div>
    <div class="d-flex align-items-center"><label class="lab" for="item">具体项</label><input id="item" class="tin" style="width:226px" value="031301017"><button class="pbtn wd24">...</button></div>
    <div class="d-flex justify-content-end" style="gap:6px;margin-top:12px"><button class="pbtn big pri">确定</button><button class="pbtn big">取消</button></div>
  </div>
</div>

<div class="win w3" role="dialog" aria-label="指定具体位置">
  <div class="winhead d-flex align-items-center">指定具体位置<button class="plain ms-auto" aria-label="关闭"><svg width="11" height="10"><path d="M1 0l9 9M10 0L1 9" stroke="#fff" stroke-width="2.200"/></svg></button></div>
  <div style="padding:10px 10px 12px">
    <div class="d-flex align-items-center"><label style="width:54px" for="kw">关键字：</label><input id="kw" class="tin" style="width:173px" value="031301017"><button class="pbtn wd70" style="margin:0 6px 0 11px">过滤</button><button class="pbtn wd70">取消过滤</button></div>
    <div class="box mt-1" style="height:268px;border-width:2px 1px 2px;margin-bottom:10px">
    <table class="sheetgrid locs">
      <colgroup><col style="width:22px"><col style="width:107px"><col style="width:56px"><col style="width:81px"><col style="width:200px"><col></colgroup>
      <thead><tr><th></th><th class="hot">编码</th><th>类型</th><th>组价方式</th><th>名称</th><th>具体位置</th></tr></thead>
      <tbody>
      <tr class="on"><th class="hot">1</th><td class="tree ed"><svg width="30" height="19"><path d="M8.500 15v6" stroke="#ffc266"/><rect x="2.500" y="3.500" width="12" height="12" fill="#fff" stroke="#888"/><path d="M5 9.500h7" stroke="#000"/></svg></td><td class="c">部</td><td></td><td>措施项目</td><td></td></tr>
      <tr><th>2</th><td class="tree"><span class="d-flex align-items-center"><svg width="29" height="22"><path d="M8.500 0v22M8 10.500h17" stroke="#ffc266" fill="none"/></svg>一</span></td><td class="c">部</td><td></td><td>总价措施</td><td></td></tr>
      <tr><th>3</th><td class="tree"><span class="d-flex align-items-center"><svg width="29" height="22"><path d="M8.500 0v10.500h4M18.500 16v6" stroke="#ffc266" fill="none"/><rect x="12.500" y="4.500" width="12" height="12" fill="#fff" stroke="#888"/><path d="M15 10.500h7" stroke="#000"/></svg>二</span></td><td class="c">部</td><td></td><td>单价措施</td><td></td></tr>
      <tr><th>4</th><td class="tree"><svg width="36" height="22"><path d="M18.500 0v10.500h17" stroke="#ffc266" fill="none"/></svg></td><td class="c">项</td><td class="c">可计量清单</td><td></td><td></td></tr>
      </tbody>
    </table>
    </div>
    <div class="d-flex justify-content-end" style="gap:6px"><button class="pbtn big" disabled>确定</button><button class="pbtn big">取消</button></div>
  </div>
  <svg class="grip" width="10" height="10" fill="#aaa"><path d="M8 0h2v2H8zM4 4h2v2H4zM8 4h2v2H8zM0 8h2v2H0zM4 8h2v2H4zM8 8h2v2H8z"/></svg>
</div>

<svg class="marks" width="1395" height="861" viewBox="0 0 1395 861" fill="#ff2412" aria-hidden="true">
  <path d="M609 375l20 2-3 6 155 113-162-107-4 4z"/>
  <path d="M461 717l12-17 1 6 311-153-307 161 4 5z"/>
  <path d="M903 337l19 14-6 3 104 250-114-247-4 3z"/>
</svg>
<script src="https://cdn.jsdelivr.net/npm/bootstrap@5.3.0/dist/js/bootstrap.bundle.min.js"></script>
</body>
</html>
